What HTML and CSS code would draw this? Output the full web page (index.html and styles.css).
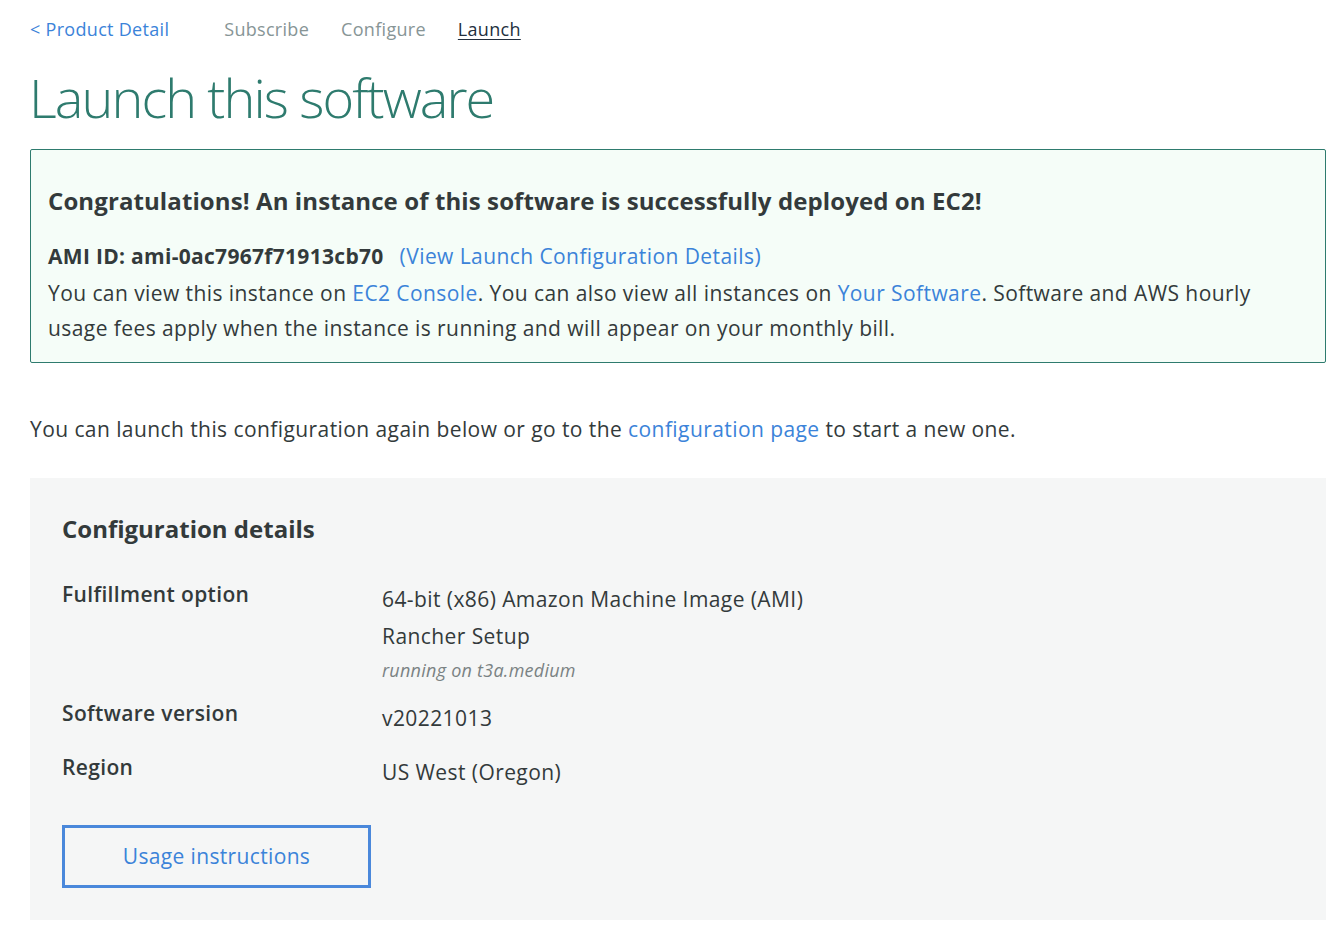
FILE: index.html
```html
<!DOCTYPE html>
<html lang="en">
<head>
<meta charset="utf-8">
<title>Launch this software</title>
<link rel="stylesheet" href="styles.css">
</head>
<body>
<div class="page">
  <nav class="steps">
    <a class="back" href="#">&lt; Product Detail</a>
    <span class="step">Subscribe</span>
    <span class="step">Configure</span>
    <span class="step current">Launch</span>
  </nav>
  <h1 class="title">Launch this software</h1>

  <section class="alert">
    <h2 class="alert-heading">Congratulations! An instance of this software is successfully deployed on EC2!</h2>
    <p class="ami"><strong>AMI ID: ami-0ac7967f71913cb70</strong><a class="link ami-link" href="#">(View Launch Configuration Details)</a></p>
    <p class="alert-text">You can view this instance on <a class="link" href="#">EC2 Console</a>. You can also view all instances on <a class="link" href="#">Your Software</a>. Software and AWS hourly usage fees apply when the instance is running and will appear on your monthly bill.</p>
  </section>

  <p class="again">You can launch this configuration again below or go to the <a class="link" href="#">configuration page</a> to start a new one.</p>

  <section class="config">
    <h2 class="config-heading">Configuration details</h2>
    <dl class="details">
      <div class="row">
        <dt>Fulfillment option</dt>
        <dd>
          <div class="val">64-bit (x86) Amazon Machine Image (AMI)</div>
          <div class="val">Rancher Setup</div>
          <div class="sub">running on t3a.medium</div>
        </dd>
      </div>
      <div class="row">
        <dt>Software version</dt>
        <dd><div class="val">v20221013</div></dd>
      </div>
      <div class="row">
        <dt>Region</dt>
        <dd><div class="val">US West (Oregon)</div></dd>
      </div>
    </dl>
    <button class="usage" type="button">Usage instructions</button>
  </section>
</div>
</body>
</html>
```

FILE: styles.css
```css
* { box-sizing: border-box; }
html, body { margin: 0; padding: 0; background: #fff; }
body {
  font-family: "Open Sans", "Noto Sans", sans-serif;
  color: #333a3b;
}
.page {
  padding: 16px 12px 0 30px;
}
.steps {
  display: flex;
  align-items: baseline;
  font-size: 18px;
  line-height: 26px;
  letter-spacing: 0.3px;
}
.steps a, .steps span { text-decoration: none; }
.back { color: #3b83d9; margin-right: 55px; }
.step { color: #879596; margin-right: 32px; }
.step.current { color: #232f3e; text-decoration: underline !important; text-underline-offset: 3px; }
.title {
  margin: 20px 0 0 -1px;
  font-weight: 300;
  font-size: 54px;
  line-height: 70px;
  color: #2e7b6e;
  letter-spacing: -1.9px;
}
.alert {
  margin-top: 17px;
  border: 1px solid #2e7b6e;
  border-radius: 2px;
  background: #f5fdf8;
  padding: 34px 40px 16px 17px;
}
.alert-heading {
  margin: 0;
  font-size: 24px;
  line-height: 34px;
  font-weight: 700;
  letter-spacing: 0.1px;
  color: #333a3b;
}
.ami {
  margin: 21px 0 0;
  font-size: 21px;
  line-height: 34px;
  letter-spacing: 0.42px;
}
.ami strong { font-weight: 700; letter-spacing: 0.3px; }
.ami-link { margin-left: 16px; }
.alert-text {
  margin: 3px 0 0;
  font-size: 21px;
  line-height: 35px;
  letter-spacing: 0.42px;
}
.link { color: #3b83d9; text-decoration: none; }
.again {
  margin: 49px 0 0;
  font-size: 21px;
  line-height: 34px;
  letter-spacing: 0.42px;
}
.config {
  margin-top: 32px;
  background: #f5f6f6;
  padding: 34px 32px 32px 32px;
}
.config-heading {
  margin: 0;
  font-size: 24px;
  line-height: 34px;
  font-weight: 700;
}
.details {
  margin: 33px 0 0;
  display: flex;
  flex-direction: column;
  gap: 15px;
}
.row {
  display: grid;
  grid-template-columns: 320px 1fr;
}
.row dt {
  font-size: 21px;
  line-height: 30px;
  font-weight: 600;
  letter-spacing: 0.35px;
}
.row dd { margin: 0; padding-top: 6px; }
.val { font-size: 21px; line-height: 37px; margin-top: -4px; letter-spacing: 0.42px; }
.val + .val { margin-top: 0; }
.sub {
  font-size: 18px;
  font-style: italic;
  color: #7a8283;
  line-height: 26px;
  margin-top: 1.5px;
  letter-spacing: 0.25px;
}
.usage {
  display: block;
  margin-top: 34px;
  width: 309px;
  height: 63px;
  border: 3px solid #4a88db;
  background: transparent;
  color: #3b83d9;
  font-family: inherit;
  font-size: 21px;
  letter-spacing: 0.35px;
  cursor: pointer;
}
```
